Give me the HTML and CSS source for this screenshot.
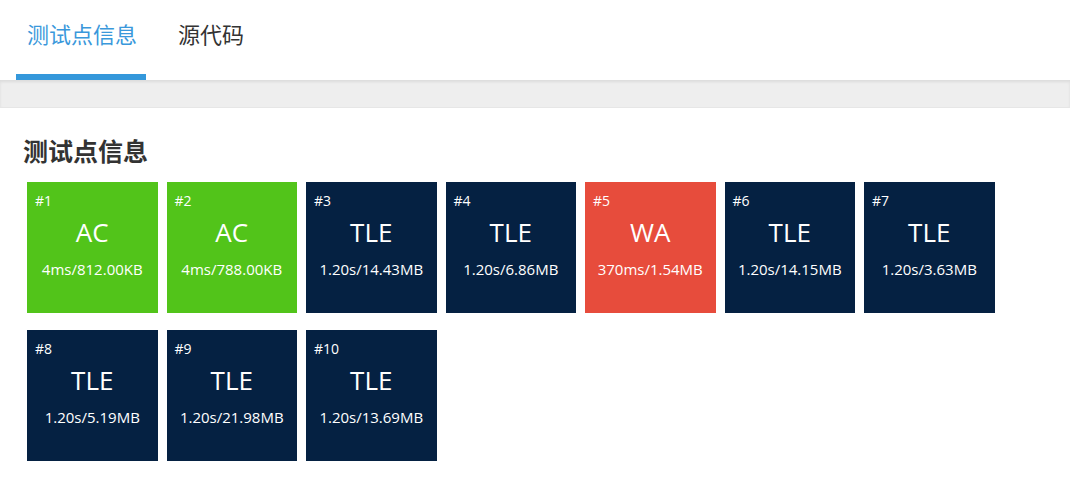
FILE: index.html
```html
<!DOCTYPE html>
<html lang="zh">
<head>
<meta charset="utf-8">
<link rel="stylesheet" href="styles.css">
</head>
<body>
<nav class="tabs">
  <div class="tab active">测试点信息</div>
  <div class="tab">源代码</div>
</nav>
<div class="band"></div>
<main class="content">
  <h2 class="title">测试点信息</h2>
  <div class="grid">
    <div class="case ac"><span class="num">#1</span><span class="verdict">AC</span><span class="stat">4ms/812.00KB</span></div>
    <div class="case ac"><span class="num">#2</span><span class="verdict">AC</span><span class="stat">4ms/788.00KB</span></div>
    <div class="case tle"><span class="num">#3</span><span class="verdict">TLE</span><span class="stat">1.20s/14.43MB</span></div>
    <div class="case tle"><span class="num">#4</span><span class="verdict">TLE</span><span class="stat">1.20s/6.86MB</span></div>
    <div class="case wa"><span class="num">#5</span><span class="verdict">WA</span><span class="stat">370ms/1.54MB</span></div>
    <div class="case tle"><span class="num">#6</span><span class="verdict">TLE</span><span class="stat">1.20s/14.15MB</span></div>
    <div class="case tle"><span class="num">#7</span><span class="verdict">TLE</span><span class="stat">1.20s/3.63MB</span></div>
    <div class="case tle"><span class="num">#8</span><span class="verdict">TLE</span><span class="stat">1.20s/5.19MB</span></div>
    <div class="case tle"><span class="num">#9</span><span class="verdict">TLE</span><span class="stat">1.20s/21.98MB</span></div>
    <div class="case tle"><span class="num">#10</span><span class="verdict">TLE</span><span class="stat">1.20s/13.69MB</span></div>
  </div>
</main>
</body>
</html>
```
FILE: styles.css
```css
* { box-sizing: border-box; }
html, body { margin: 0; padding: 0; background: #fff; }
body {
  font-family: "Open Sans", "Noto Sans CJK SC", sans-serif;
  color: #333;
}
.tabs {
  display: flex;
  padding-left: 16px;
  height: 80px;
}
.tab {
  font-size: 22px;
  line-height: 28px;
  padding: 20px 9px 0 11px;
  color: #333;
  margin-right: 21px;
}
.tab.active {
  color: #3a98db;
  border-bottom: 6px solid #3498db;
}
.band {
  height: 28px;
  background: #eeeeee;
  box-shadow: inset 0 2px 3px rgba(0,0,0,0.08);
  border-bottom: 1px solid #e6e6e6;
}
.content {
  padding: 26px 0 0 27px;
}
.title {
  margin: 0 0 13px -4px;
  font-size: 25px;
  line-height: 35px;
  font-weight: bold;
  color: #333;
}
.grid {
  display: flex;
  flex-wrap: wrap;
  column-gap: 9px;
  row-gap: 17px;
  width: 1000px;
}
.case {
  width: 130.5px;
  height: 131px;
  color: #fff;
  display: flex;
  flex-direction: column;
  align-items: center;
  padding-top: 10px;
}
.case.ac { background: #52c41a; }
.case.tle { background: #052142; }
.case.wa { background: #e74c3c; }
.num {
  align-self: flex-start;
  margin-left: 8px;
  font-size: 14px;
  line-height: 18px;
}
.verdict {
  font-size: 26px;
  line-height: 36px;
  margin-top: 4px;
}
.stat {
  font-size: 15px;
  font-weight: 500;
  line-height: 18px;
  margin-top: 10px;
}
```
